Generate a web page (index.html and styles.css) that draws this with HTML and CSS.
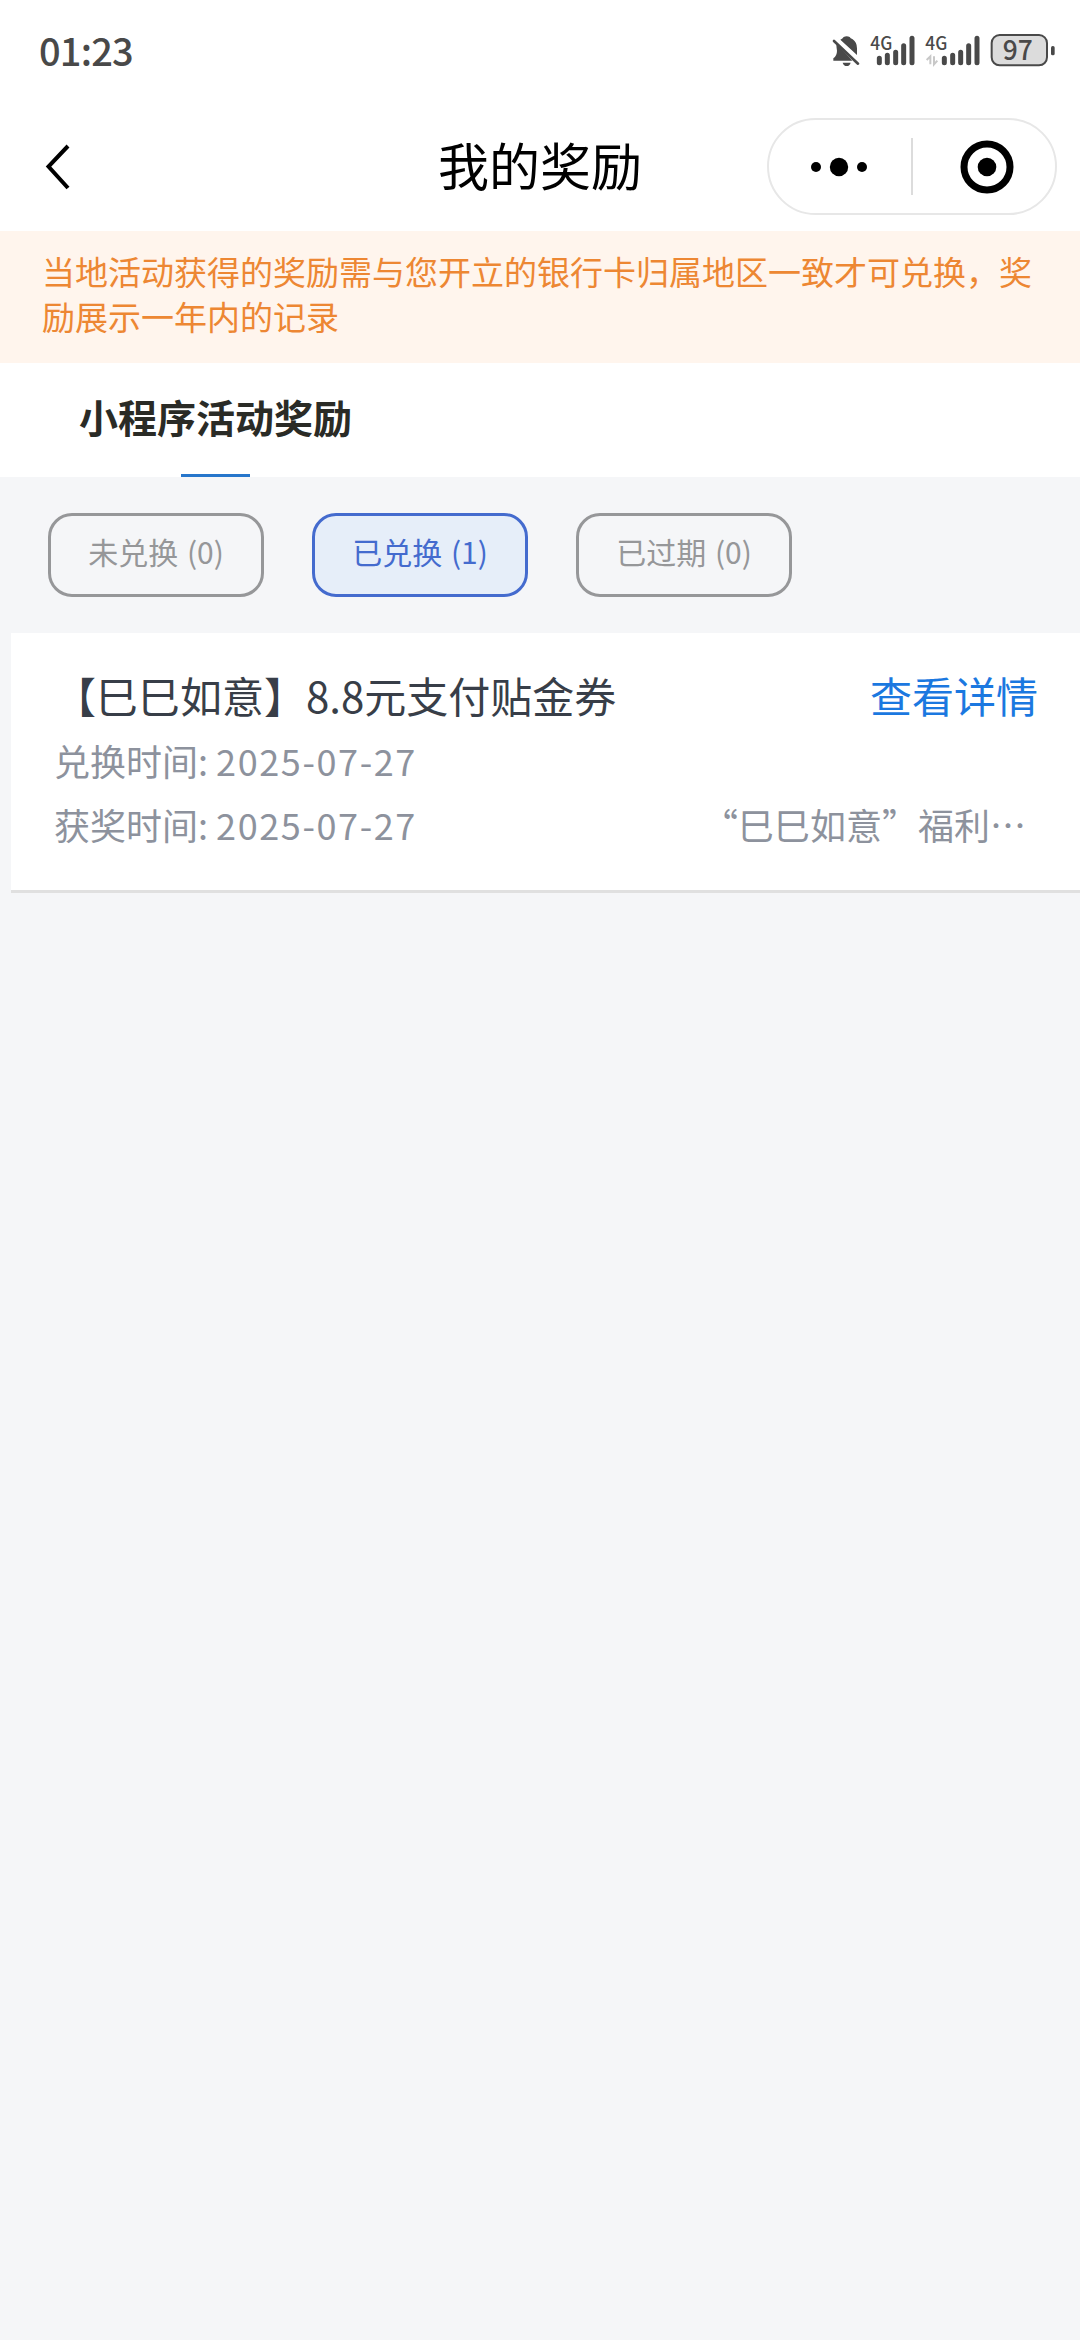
FILE: index.html
```html
<!DOCTYPE html>
<html lang="zh-CN">
<head>
<meta charset="utf-8">
<title>我的奖励</title>
<link rel="stylesheet" href="styles.css">
</head>
<body>
<header class="statusbar">
  <time class="clock">01:23</time>
  <svg class="status-icons" viewBox="0 0 810 195" width="270" height="65">
    <g fill="#494949">
      <path d="M79 70 L127 122 H70 V115 Q81 107 81 92 Q79 80 79 70Z"/>
      <path d="M91 59 Q98 56 101 51 Q110 46 119 51 Q121 55 128 58 Q141 67 141 85 V105Z"/>
      <path d="M98 128 H122 Q119 138 110 138 Q101 138 98 128Z"/>
    </g>
    <path d="M72 63 L144 131" stroke="#494949" stroke-width="8" stroke-linecap="round"/>
    <path d="M82 58 L143 114" stroke="#fff" stroke-width="7"/>
    <g stroke="#494949" stroke-width="15" stroke-linecap="round">
      <path d="M208 115V128M232 106V128M257 97V128M281 77V128M306 55V128"/>
      <path d="M403 115V128M428 106V128M452 97V128M476 77V128M501 55V128"/>
    </g>
    <g class="network">
      <text x="181" y="89" textLength="66" lengthAdjust="spacingAndGlyphs">4G</text>
      <text x="346" y="89" textLength="66" lengthAdjust="spacingAndGlyphs">4G</text>
    </g>
    <path d="M361 133V109L350 120M372 109V133L382 122" fill="none" stroke="#c8c8c8" stroke-width="6"/>
    <rect x="545" y="45" width="166" height="91" rx="24" fill="#dcdcdc" stroke="#494949" stroke-width="6"/>
    <rect x="723" y="78" width="11" height="28" rx="5" fill="#494949"/>
    <text class="battery" x="578" y="120" textLength="90" lengthAdjust="spacingAndGlyphs">97</text>
  </svg>
</header>
<nav class="navbar">
  <svg class="back" viewBox="0 0 26 48" width="26" height="48"><path d="M23 3 3.5 23.5 23 45" fill="none" stroke="#000" stroke-width="4"/></svg>
  <h1 class="title">我的奖励</h1>
  <div class="capsule">
    <svg class="more" viewBox="0 0 56 20" width="56" height="20"><circle cx="5" cy="10" r="5"/><circle cx="28" cy="10" r="9.2"/><circle cx="51" cy="10" r="5"/></svg>
    <span class="divider"></span>
    <svg class="close" viewBox="0 0 54 54" width="54" height="54"><circle cx="27" cy="27" r="23" fill="none" stroke="#000" stroke-width="7"/><circle cx="27" cy="27" r="9.3"/></svg>
  </div>
</nav>
<p class="notice">当地活动获得的奖励需与您开立的银行卡归属地区一致才可兑换，奖励展示一年内的记录</p>
<div class="tabs"><div class="tab">小程序活动奖励</div></div>
<main>
  <div class="filters">
    <div class="filter">未兑换 (0)</div>
    <div class="filter active">已兑换 (1)</div>
    <div class="filter">已过期 (0)</div>
  </div>
  <article class="card">
    <div class="row heading"><h2>【巳巳如意】8.8元支付贴金券</h2><a class="detail">查看详情</a></div>
    <div class="row meta"><span>兑换时间: <span class="date">2025-07-27</span></span></div>
    <div class="row meta"><span>获奖时间: <span class="date">2025-07-27</span></span><span class="campaign">“巳巳如意”福利…</span></div>
  </article>
</main>
</body>
</html>
```
FILE: styles.css
```css
* { box-sizing: border-box; }
body {
  margin: 0;
  min-height: 2340px;
  background: #f5f6f8;
  font-family: "Noto Sans CJK SC", sans-serif;
}
h1, h2, p { margin: 0; font-weight: 400; }
svg { display: block; }

.statusbar {
  display: flex;
  justify-content: space-between;
  height: 102px;
  padding-left: 39px;
  background: #fff;
}
.clock {
  font-size: 38px;
  line-height: 99px;
  letter-spacing: -0.8px;
  color: #494949;
  font-weight: 500;
}
.status-icons { margin-top: 20px; }
.network { font: 500 54px "Noto Sans CJK SC", sans-serif; fill: #494949; }
.battery { font: 500 81px "Noto Sans CJK SC", sans-serif; fill: #494949; }

.navbar {
  display: grid;
  grid-template-columns: 314px 1fr 314px;
  align-items: center;
  height: 129px;
  background: #fff;
}
.back { margin-left: 45px; }
.title {
  padding-bottom: 6px;
  font-size: 51px;
  line-height: 76px;
  text-align: center;
  color: #000;
}
.capsule {
  display: flex;
  align-items: center;
  width: 290px;
  height: 97px;
  margin-left: 1px;
  padding-left: 42px;
  border: 2px solid #e7e7e7;
  border-radius: 49px;
}
.divider { width: 2px; height: 57px; margin: 0 47px 0 44px; background: #dcdcdc; }

.notice {
  height: 132px;
  padding: 18px 42px 0;
  background: #fff5ed;
  color: #ed8733;
  font-size: 33px;
  line-height: 45px;
}
.tabs { display: flex; height: 114px; padding-left: 79px; background: #fff; }
.tab {
  display: flex;
  flex-direction: column;
  align-items: center;
  justify-content: space-between;
  font-size: 39px;
  line-height: 106px;
  font-weight: 700;
  color: #2a2b26;
}
.tab::after { content: ""; width: 69px; height: 3px; background: #2676cb; }

.filters { display: flex; gap: 48px; padding: 36px 48px; }
.filter {
  width: 216px;
  height: 84px;
  border: 3px solid #969799;
  border-radius: 24px;
  color: #969799;
  font-size: 30px;
  line-height: 71px;
  word-spacing: 2px;
  text-align: center;
}
.filter.active { border-color: #446bce; background: #e6eef9; color: #446bce; }

.card {
  height: 260px;
  margin-left: 11px;
  padding: 31px 42px 0 43px;
  border-bottom: 3px solid #e0e0e0;
  background: #fff;
}
.row { display: flex; justify-content: space-between; height: 64px; line-height: 64px; }
.heading { line-height: 62px; }
h2, .detail { font-size: 42px; }
h2 { color: #383e48; }
.detail { color: #1b78e0; }
.meta { font-size: 36px; color: #8d929d; }
.date { letter-spacing: 1.6px; }
.campaign { padding-right: 12px; }
```
